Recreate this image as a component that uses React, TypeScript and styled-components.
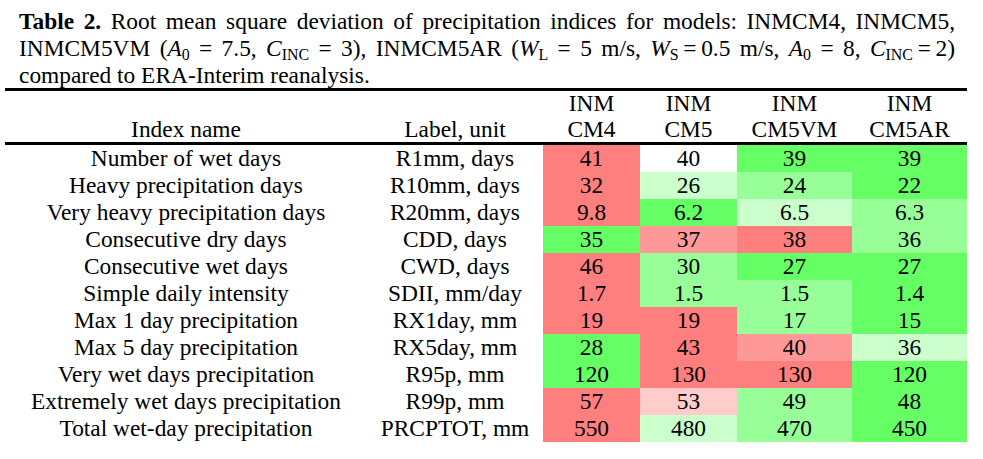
import React from "react";
import styled, { createGlobalStyle } from "styled-components";

const SERIF = `"Liberation Serif", "Times New Roman", Times, serif`;
const COLS = "362px 176px 97px 97px 115px 115px";

const Global = createGlobalStyle`
  html, body { margin: 0; padding: 0; background: #ffffff; }
  body { font-family: ${SERIF}; color: #000; }
`;

const Page = styled.div`
  padding-top: 8px;
  width: 983px;
  font-family: ${SERIF};
  font-size: 23.4px;
  color: #000;
`;

const Caption = styled.div`
  margin-left: 19px;
  width: 936px;
  line-height: 27px;
`;

const CaptionLine = styled.span<{ $justify?: boolean }>`
  display: block;
  text-align: ${(p) => (p.$justify ? "justify" : "left")};
  text-align-last: ${(p) => (p.$justify ? "justify" : "left")};
  white-space: nowrap;
`;

const Bold = styled.b`
  font-weight: 700;
`;

const Var = styled.i`
  font-style: italic;
`;

const Sub = styled.sub`
  font-size: 0.68em;
  vertical-align: -0.28em;
  line-height: 0;
  font-style: normal;
`;

const Grid = styled.div`
  margin-left: 5px;
  width: 962px;
  margin-top: -1px;
  display: flex;
  flex-direction: column;
`;

const HeadRow = styled.div`
  display: grid;
  grid-template-columns: ${COLS};
  border-top: 3px solid #000;
  border-bottom: 3px solid #000;
`;

const HeadCell = styled.div`
  align-self: end;
  text-align: center;
  line-height: 25.5px;
`;

const BodyRow = styled.div`
  display: grid;
  grid-template-columns: ${COLS};
  height: 27px;
`;

const Cell = styled.div<{ $bg?: string }>`
  text-align: center;
  line-height: 27px;
  white-space: nowrap;
  background: ${(p) => p.$bg ?? "transparent"};
`;

const R = "#ff7f7f";
const LR = "#ff9898";
const VLR = "#ffcbcb";
const G = "#65ff65";
const MG = "#98ff98";
const LG = "#cbffcb";
const W = "#ffffff";

type Row = { name: string; label: string; vals: [string, string][] };

const rows: Row[] = [
  { name: "Number of wet days", label: "R1mm, days", vals: [["41", R], ["40", W], ["39", G], ["39", G]] },
  { name: "Heavy precipitation days", label: "R10mm, days", vals: [["32", R], ["26", LG], ["24", MG], ["22", G]] },
  { name: "Very heavy precipitation days", label: "R20mm, days", vals: [["9.8", R], ["6.2", G], ["6.5", LG], ["6.3", MG]] },
  { name: "Consecutive dry days", label: "CDD, days", vals: [["35", G], ["37", LR], ["38", R], ["36", MG]] },
  { name: "Consecutive wet days", label: "CWD, days", vals: [["46", R], ["30", MG], ["27", G], ["27", G]] },
  { name: "Simple daily intensity", label: "SDII, mm/day", vals: [["1.7", R], ["1.5", MG], ["1.5", MG], ["1.4", G]] },
  { name: "Max 1 day precipitation", label: "RX1day, mm", vals: [["19", R], ["19", R], ["17", MG], ["15", G]] },
  { name: "Max 5 day precipitation", label: "RX5day, mm", vals: [["28", G], ["43", R], ["40", LR], ["36", LG]] },
  { name: "Very wet days precipitation", label: "R95p, mm", vals: [["120", G], ["130", R], ["130", R], ["120", G]] },
  { name: "Extremely wet days precipitation", label: "R99p, mm", vals: [["57", R], ["53", VLR], ["49", MG], ["48", G]] },
  { name: "Total wet-day precipitation", label: "PRCPTOT, mm", vals: [["550", R], ["480", LG], ["470", MG], ["450", G]] },
];

const models = [
  ["INM", "CM4"],
  ["INM", "CM5"],
  ["INM", "CM5VM"],
  ["INM", "CM5AR"],
];

export default function App() {
  return (
    <Page>
      <Global />
      <Caption>
        <CaptionLine $justify>
          <Bold>Table 2.</Bold> Root mean square deviation of precipitation indices for models: INMCM4, INMCM5,
        </CaptionLine>
        <CaptionLine $justify>
          INMCM5VM (<Var>A</Var><Sub>0</Sub> = 7.5, <Var>C</Var><Sub>INC</Sub> = 3), INMCM5AR (<Var>W</Var>
          <Sub>L</Sub> = 5 m/s, <Var>W</Var><Sub>S</Sub>{"\u2009"}={"\u2009"}0.5 m/s, <Var>A</Var><Sub>0</Sub> = 8,{" "}
          <Var>C</Var><Sub>INC</Sub>{"\u2009"}={"\u2009"}2)
        </CaptionLine>
        <CaptionLine>compared to ERA-Interim reanalysis.</CaptionLine>
      </Caption>
      <Grid>
        <HeadRow>
          <HeadCell>Index name</HeadCell>
          <HeadCell>Label, unit</HeadCell>
          {models.map(([a, b]) => (
            <HeadCell key={b}>
              {a}
              <br />
              {b}
            </HeadCell>
          ))}
        </HeadRow>
        {rows.map((r) => (
          <BodyRow key={r.name}>
            <Cell>{r.name}</Cell>
            <Cell>{r.label}</Cell>
            {r.vals.map(([v, c], i) => (
              <Cell key={i} $bg={c}>
                {v}
              </Cell>
            ))}
          </BodyRow>
        ))}
      </Grid>
    </Page>
  );
}
